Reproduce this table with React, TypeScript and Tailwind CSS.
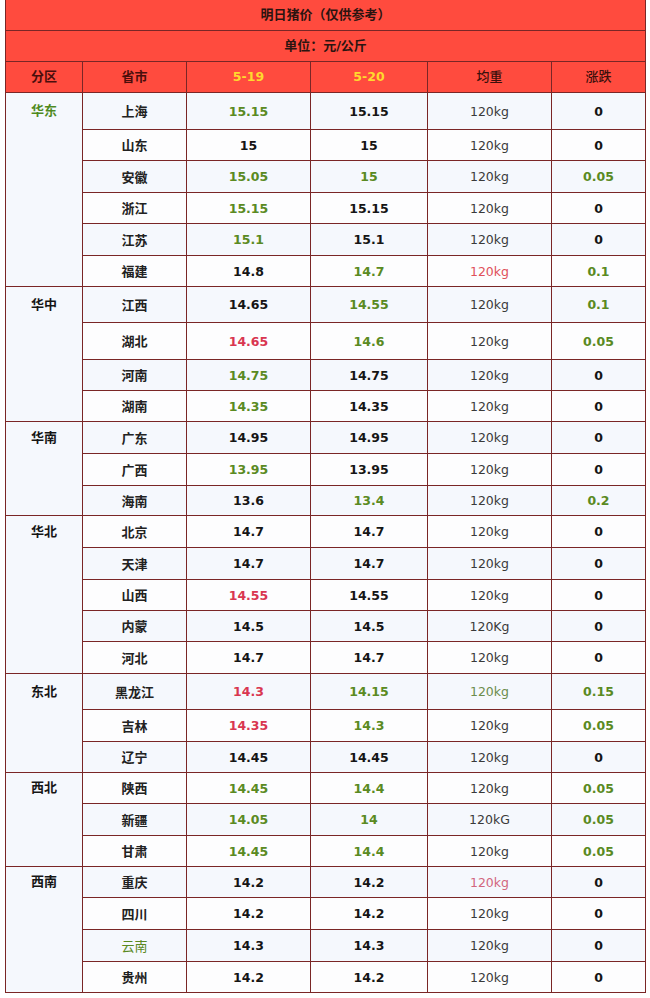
const G = 'text-[#5a8a22]';
const R = 'text-[#d93650]';
const K = 'text-[#151515]';

type Row = {
  name: string;
  nameCls?: string;
  a: string;
  ac: string;
  b: string;
  bc: string;
  w?: string;
  wc?: string;
  d: string;
  dc: string;
};

type Region = { name: string; cls: string; first: number; rows: Row[] };

const regions: Region[] = [
  {
    name: '华东',
    cls: 'text-[#4f8a1f]',
    first: 36,
    rows: [
      { name: '上海', a: '15.15', ac: G, b: '15.15', bc: K, d: '0', dc: K },
      { name: '山东', a: '15', ac: K, b: '15', bc: K, d: '0', dc: K },
      { name: '安徽', a: '15.05', ac: G, b: '15', bc: G, d: '0.05', dc: G },
      { name: '浙江', a: '15.15', ac: G, b: '15.15', bc: K, d: '0', dc: K },
      { name: '江苏', a: '15.1', ac: G, b: '15.1', bc: K, d: '0', dc: K },
      { name: '福建', a: '14.8', ac: K, b: '14.7', bc: G, wc: 'text-[#e0505a]', d: '0.1', dc: G },
    ],
  },
  {
    name: '华中',
    cls: K,
    first: 35,
    rows: [
      { name: '江西', a: '14.65', ac: K, b: '14.55', bc: G, d: '0.1', dc: G },
      { name: '湖北', a: '14.65', ac: R, b: '14.6', bc: G, d: '0.05', dc: G },
      { name: '河南', a: '14.75', ac: G, b: '14.75', bc: K, d: '0', dc: K },
      { name: '湖南', a: '14.35', ac: G, b: '14.35', bc: K, d: '0', dc: K },
    ],
  },
  {
    name: '华南',
    cls: K,
    first: 31,
    rows: [
      { name: '广东', a: '14.95', ac: K, b: '14.95', bc: K, d: '0', dc: K },
      { name: '广西', a: '13.95', ac: G, b: '13.95', bc: K, d: '0', dc: K },
      { name: '海南', a: '13.6', ac: K, b: '13.4', bc: G, d: '0.2', dc: G },
    ],
  },
  {
    name: '华北',
    cls: K,
    first: 31,
    rows: [
      { name: '北京', a: '14.7', ac: K, b: '14.7', bc: K, d: '0', dc: K },
      { name: '天津', a: '14.7', ac: K, b: '14.7', bc: K, d: '0', dc: K },
      { name: '山西', a: '14.55', ac: R, b: '14.55', bc: K, d: '0', dc: K },
      { name: '内蒙', a: '14.5', ac: K, b: '14.5', bc: K, w: '120Kg', d: '0', dc: K },
      { name: '河北', a: '14.7', ac: K, b: '14.7', bc: K, d: '0', dc: K },
    ],
  },
  {
    name: '东北',
    cls: K,
    first: 35,
    rows: [
      { name: '黑龙江', a: '14.3', ac: R, b: '14.15', bc: G, wc: 'text-[#6c8c4c]', d: '0.15', dc: G },
      { name: '吉林', a: '14.35', ac: R, b: '14.3', bc: G, d: '0.05', dc: G },
      { name: '辽宁', a: '14.45', ac: K, b: '14.45', bc: K, d: '0', dc: K },
    ],
  },
  {
    name: '西北',
    cls: K,
    first: 30,
    rows: [
      { name: '陕西', a: '14.45', ac: G, b: '14.4', bc: G, d: '0.05', dc: G },
      { name: '新疆', a: '14.05', ac: G, b: '14', bc: G, w: '120kG', d: '0.05', dc: G },
      { name: '甘肃', a: '14.45', ac: G, b: '14.4', bc: G, d: '0.05', dc: G },
    ],
  },
  {
    name: '西南',
    cls: K,
    first: 30,
    rows: [
      { name: '重庆', a: '14.2', ac: K, b: '14.2', bc: K, wc: 'text-[#d2667e]', d: '0', dc: K },
      { name: '四川', a: '14.2', ac: K, b: '14.2', bc: K, d: '0', dc: K },
      { name: '云南', nameCls: 'text-[#5a8a22] font-normal', a: '14.3', ac: K, b: '14.3', bc: K, d: '0', dc: K },
      { name: '贵州', a: '14.2', ac: K, b: '14.2', bc: K, d: '0', dc: K },
    ],
  },
];

const spans: Record<number, string> = {
  3: 'row-span-3',
  4: 'row-span-4',
  5: 'row-span-5',
  6: 'row-span-6',
};

export default function App() {
  let idx = 0;
  const body = regions.map((reg) => {
    const cells = [
      <div key={reg.name} className={`${spans[reg.rows.length]} bg-[#f5f8fd]`}>
        <div
          className={`flex items-center justify-center text-[13px] font-bold ${reg.cls}`}
          style={{ height: reg.first }}
        >
          {reg.name}
        </div>
      </div>,
    ];
    reg.rows.forEach((r) => {
      const bg = idx % 2 === 0 ? 'bg-[#f5f8fd]' : 'bg-[#fdfdfe]';
      idx++;
      const cell = `${bg} flex items-center justify-center pt-[2px]`;
      cells.push(
        <div key={r.name + 'n'} className={`${cell} text-[13px] ${r.nameCls ?? 'font-bold text-[#222]'}`}>{r.name}</div>,
        <div key={r.name + 'a'} className={`${cell} text-[12.5px] font-bold ${r.ac}`}>{r.a}</div>,
        <div key={r.name + 'b'} className={`${cell} text-[12.5px] font-bold ${r.bc}`}>{r.b}</div>,
        <div key={r.name + 'w'} className={`${cell} text-[12.5px] ${r.wc ?? 'text-[#3a3a3a]'}`}>{r.w ?? '120kg'}</div>,
        <div key={r.name + 'd'} className={`${cell} text-[12.5px] font-bold ${r.dc}`}>{r.d}</div>,
      );
    });
    return cells;
  });

  return (
    <div className="min-h-screen bg-white font-['DejaVu_Sans','Noto_Sans_CJK_SC',sans-serif]">
      <div className="ml-[5px] w-[641px] bg-[#7a2626] px-px pb-px">
        <div className="grid grid-cols-[76px_103px_123px_116px_123px_93px] grid-rows-[30px_30px_30px_36px_30px_31px_30px_31px_30px_35px_36px_30px_30px_31px_31px_29px_31px_31px_30px_30px_31px_35px_31px_30px_30px_31px_30px_30px_31px_31px_30px] gap-px">
          <div className="col-span-6 flex items-center justify-center bg-[#ff4b3e] text-[13px] font-bold text-[#2b1410]">
            明日猪价（仅供参考）
          </div>
          <div className="col-span-6 flex items-center justify-center bg-[#ff4b3e] text-[13px] font-bold text-[#2b1410]">
            单位：元/公斤
          </div>
          <div className="flex items-center justify-center bg-[#ff4b3e] text-[13px] font-bold text-[#4a0e0c]">分区</div>
          <div className="flex items-center justify-center bg-[#ff4b3e] text-[13px] font-bold text-[#4a0e0c]">省市</div>
          <div className="flex items-center justify-center bg-[#ff4b3e] text-[12.5px] font-bold text-[#ffd92e]">5-19</div>
          <div className="flex items-center justify-center bg-[#ff4b3e] text-[12.5px] font-bold text-[#ffd92e]">5-20</div>
          <div className="flex items-center justify-center bg-[#ff4b3e] text-[13px] font-medium text-[#3a100c]">均重</div>
          <div className="flex items-center justify-center bg-[#ff4b3e] text-[13px] font-medium text-[#3a100c]">涨跌</div>
          {body}
        </div>
      </div>
    </div>
  );
}
